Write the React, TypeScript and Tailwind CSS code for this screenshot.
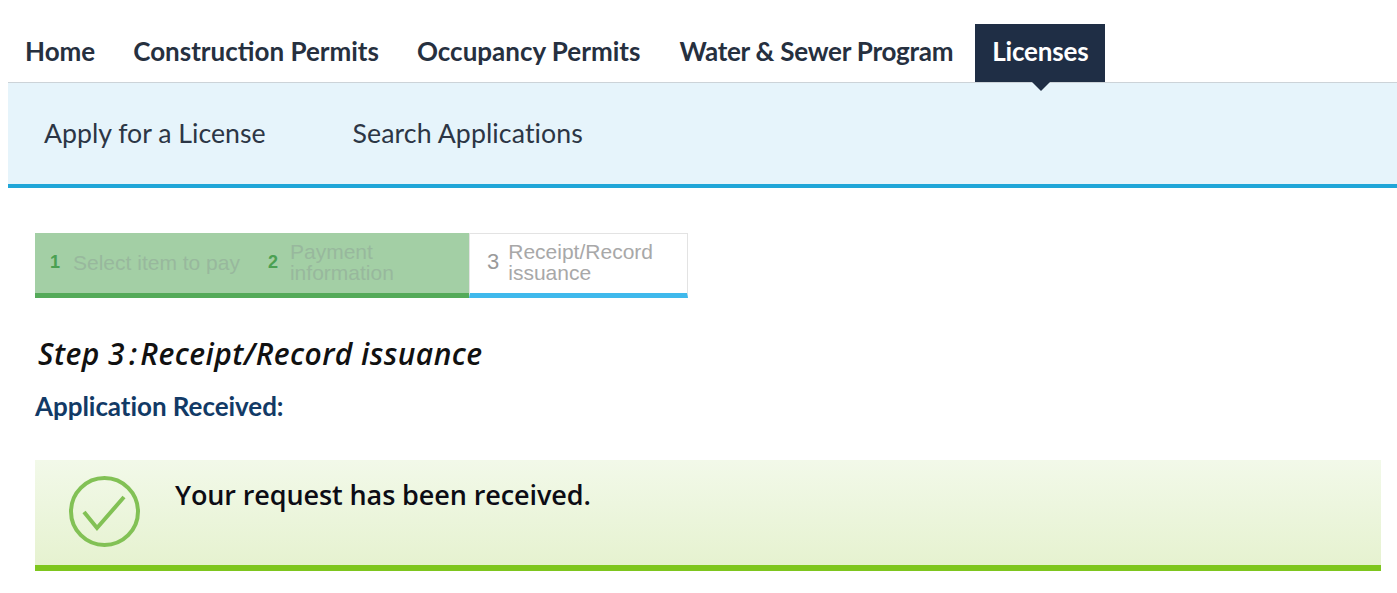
const navItems = ["Home", "Construction Permits", "Occupancy Permits"];

export default function App() {
  return (
    <div className="h-[593px] overflow-hidden bg-white pl-2 font-['Lato',sans-serif]">
      {/* Main nav */}
      <nav className="mt-6 flex h-[59px] items-end gap-[22px] border-b border-[#ccd3d8] pl-[17px]">
        {navItems.map((item) => (
          <a key={item} className="flex h-[58px] items-center pb-[3px] pr-[16px] text-[26px] font-bold text-[#26303f]">
            {item}
          </a>
        ))}
        <a className="flex h-[58px] items-center pb-[3px] pl-px pr-[16px] text-[26px] font-bold tracking-[-0.24px] text-[#26303f]">
          Water &amp; Sewer Program
        </a>
        <a className="relative -ml-[16px] flex h-[58px] w-[130px] items-center justify-center bg-[#1f2e45] pb-[3px] text-[26px] font-bold tracking-[-0.2px] text-white">
          Licenses
          <span className="absolute left-[57px] top-full h-0 w-0 border-x-[9px] border-t-[9px] border-x-transparent border-t-[#1f2e45]" />
        </a>
      </nav>

      {/* Sub nav */}
      <div className="flex h-[105px] items-center gap-[87px] border-b-4 border-[#20a6d8] bg-[#e6f4fb] pb-px pl-9 text-[26.7px] text-[#2c3645]">
        <a>Apply for a License</a>
        <a className="tracking-[0.1px]">Search Applications</a>
      </div>

      <div className="pl-[27px] pr-4">
        {/* Stepper */}
        <div className="mt-[45px] flex h-[65px] w-[653px] font-['Liberation_Sans',sans-serif] text-[21px] leading-[21px] text-[#b3b3b3]">
          <div className="flex w-[434px] items-center border-b-[5px] border-[#54aa59] bg-[#a3cfa5] pb-[2px] text-[#98b89d]">
            <span className="ml-[15px] text-[18px] font-bold text-[#4ba052]">1</span>
            <span className="ml-[13px]">Select item to pay</span>
            <span className="ml-[28px] text-[18px] font-bold text-[#4ba052]">2</span>
            <span className="ml-[12px]">Payment<br />information</span>
          </div>
          <div className="flex flex-1 items-center border border-b-[5px] border-[#e3e3e3] border-b-[#3fb9ec] bg-white pb-[4px] text-[#a8a8a8]">
            <span className="ml-[17px] text-[22px] text-[#9a9a9a]">3</span>
            <span className="ml-[9px]">Receipt/Record<br />issuance</span>
          </div>
        </div>

        <h1 className="ml-[3px] mt-[38px] flex font-['Open_Sans',sans-serif] text-[30px] leading-[36px] font-semibold tracking-[0.42px] italic text-[#111]">
          <span>Step 3</span>
          <span className="ml-[4px] mr-[3px]">:</span>
          <span>Receipt/Record issuance</span>
        </h1>
        <p className="mt-[19px] text-[26px] leading-[30px] font-bold tracking-[-0.05px] text-[#123a66]">Application Received:</p>

        {/* Success message */}
        <div className="mt-[39px] flex h-[111px] w-[1346px] border-b-[6px] border-[#7ec61e] bg-gradient-to-b from-[#f2f9e9] to-[#e6f2d0]">
          <svg width="71" height="71" viewBox="0 0 71 71" fill="none" stroke="#82c155" className="ml-[34px] mt-[16px] shrink-0">
            <circle cx="35.5" cy="35.5" r="33.5" strokeWidth="4" />
            <polyline points="15,36 28,52 55,21" strokeWidth="4" />
          </svg>
          <p className="ml-[35px] mt-[18px] font-['Open_Sans',sans-serif] text-[27px] leading-[34px] font-semibold tracking-[-0.1px] text-[#0c0c14]">Your request has been received.</p>
        </div>
      </div>
    </div>
  );
}
